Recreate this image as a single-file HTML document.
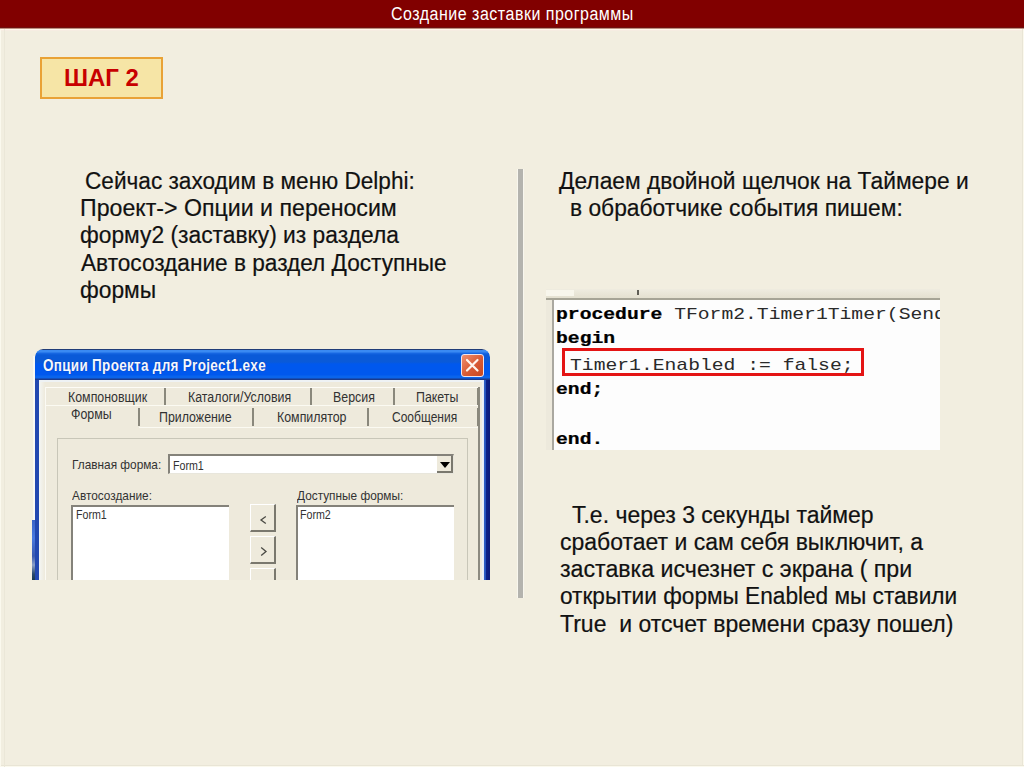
<!DOCTYPE html>
<html><head><meta charset="utf-8">
<style>
*{margin:0;padding:0;box-sizing:border-box}
html,body{width:1024px;height:767px;overflow:hidden;background:#f2eee0}
body{position:relative;font-family:"Liberation Sans",sans-serif;color:#000}
.a{position:absolute}
.hdr{position:absolute;left:0;top:0;width:1024px;height:31px;background:linear-gradient(#810000 0,#810000 27px,#6e1010 27px,#6e1010 28px,#c09080 28px,#c09080 29px,#fff8ee 29px,#fff8ee 30px,#f6ece2 30px)}
.hdr span{position:absolute;left:391px;top:6.2px;color:#fff;font-size:16px;line-height:18px;white-space:pre;letter-spacing:0.5px;transform:scaleY(1.1);transform-origin:0 14px}
.step{position:absolute;left:40px;top:57px;width:123px;height:42px;border:2px solid #e9a236;background:#f6e5a6}
.step span{position:absolute;left:21.5px;top:6.3px;color:#c80000;font-weight:bold;font-size:23px;line-height:26px;white-space:pre;transform:scaleX(1.04);transform-origin:0 0}
.txt{position:absolute;font-size:22.8px;line-height:27.2px;white-space:pre;color:#111;-webkit-text-stroke:0.2px #111}
.divider{position:absolute;left:518px;top:169px;width:5px;height:429px;background:#b4b3ae;box-shadow:-1px 0 #f8f6ee,1px 0 #f8f6ee}
/* code */
.code{position:absolute;left:546px;top:289px;width:394px;height:161px;background:#ede9dc;overflow:hidden}
.code .strip{position:absolute;left:0;top:0;width:394px;height:9px;background:linear-gradient(#efece0,#e4e0d0)}
.code .hl{position:absolute;left:0;top:1px;width:28px;height:6px;background:#f8f6ec}
.code .mk{position:absolute;left:91px;top:1px;width:2px;height:5px;background:#605e56}
.code .line{position:absolute;left:0;top:9px;width:394px;height:2px;background:#a6a496}
.code .lm{position:absolute;left:6px;top:11px;width:1.5px;height:150px;background:#aaa8a0}
.code .ed{position:absolute;left:7px;top:11px;width:387px;height:150px;background:#fdfdfd}
.cl{position:absolute;font-family:"Liberation Mono",monospace;font-size:19.7px;line-height:22px;white-space:pre;color:#2a2a2a;transform:scaleY(0.82);transform-origin:0 16.25px}
.cl b{font-weight:bold;color:#000;-webkit-text-stroke:0.3px #000}
.rbox{position:absolute;left:16px;top:59px;width:302px;height:28px;border:3.5px solid #e41414}
/* dialog */
.dlg{position:absolute;left:35px;top:349px;width:455px;height:231px;background:#eeeadc;overflow:hidden;border-radius:8px 8px 0 0}
.tb{position:absolute;left:0;top:0;width:455px;height:31px;background:linear-gradient(#203c78 0,#203c78 1px,#3a8af2 1px,#3a8af2 3px,#1a6ae4 4px,#0a5ad8 6px,#0a5ad8 13px,#0058ee 15px,#0058ee 26px,#0a64ec 27px,#0a64ec 29px,#1a3a8c 30px);border-radius:8px 8px 0 0}
.tb span{position:absolute;left:8px;top:11px;color:#f4f8ff;font-weight:bold;font-size:13.5px;line-height:14px;white-space:pre;letter-spacing:0.3px;transform:scaleY(1.22);transform-origin:0 11px;text-shadow:0 0 1px #0a2a90}
.bl{position:absolute;left:0;top:31px;width:4px;height:200px;background:#2248b0}
.bl2{position:absolute;left:4px;top:31px;width:6px;height:200px;background:linear-gradient(90deg,#f4f6f4,#eeeadc)}
.br{position:absolute;left:447px;top:31px;width:8px;height:200px;background:linear-gradient(90deg,#eef2f8 0,#e0e8f4 2px,#3060c8 2px,#2050b8 4px,#0c2088 4px,#0a1a78 100%)}
.cbtn{position:absolute;left:426px;top:5px;width:23px;height:23px;border:1.5px solid #f0e4ec;border-radius:3px;background:linear-gradient(135deg,#f09070,#d85a34 55%,#c84820)}
.t{position:absolute;font-size:12.4px;line-height:14px;white-space:pre;color:#323232}
.tr{transform:scaleY(1.12);transform-origin:0 11px}
.sx{transform:scaleX(0.955);transform-origin:0 0}
.fx{transform:scaleX(0.86);transform-origin:0 0}
.tab{position:absolute;background:#eeeadc}
.sep{position:absolute;width:1.6px;background:#8a887c}
.btn{background:#eeeadc;border-right:2px solid #7a786e;border-bottom:2px solid #7a786e;border-top:1px solid #fff;border-left:1px solid #fff}
</style></head><body>
<div class="hdr"><span>Создание заставки программы</span></div>
<div class="step"><span>ШАГ 2</span></div>
<div class="txt" id="L0" style="transform:scale(0.992,1.065);transform-origin:0 21px;left:85px;top:168px">Сейчас заходим в меню Delphi:</div>
<div class="txt" id="L1" style="transform:scale(1.016,1.065);transform-origin:0 21px;left:80px;top:195px">Проект-&gt; Опции и переносим</div>
<div class="txt" id="L2" style="transform:scale(1.0,1.065);transform-origin:0 21px;left:80px;top:222px">форму2 (заставку) из раздела</div>
<div class="txt" id="L3" style="transform:scale(0.993,1.065);transform-origin:0 21px;left:81px;top:250px">Автосоздание в раздел Доступные</div>
<div class="txt" id="L4" style="transform:scale(1.0,1.065);transform-origin:0 21px;left:80px;top:277px">формы</div>
<div class="txt" id="L5" style="transform:scale(1.0,1.065);transform-origin:0 21px;left:559px;top:168px">Делаем двойной щелчок на Таймере и</div>
<div class="txt" id="L6" style="transform:scale(1.0,1.065);transform-origin:0 21px;left:570px;top:195px">в обработчике события пишем:</div>
<div class="txt" id="L7" style="transform:scale(1.008,1.065);transform-origin:0 21px;left:572px;top:502px">Т.е. через 3 секунды таймер</div>
<div class="txt" id="L8" style="transform:scale(1.008,1.065);transform-origin:0 21px;left:560px;top:529px">сработает и сам себя выключит, а</div>
<div class="txt" id="L9" style="transform:scale(1.016,1.065);transform-origin:0 21px;left:560px;top:556px">заставка исчезнет с экрана ( при</div>
<div class="txt" id="L10" style="transform:scale(0.993,1.065);transform-origin:0 21px;left:560px;top:583px">открытии формы Enabled мы ставили</div>
<div class="txt" id="L11" style="transform:scale(1.009,1.065);transform-origin:0 21px;left:560px;top:610.5px">True  и отсчет времени сразу пошел)</div>
<div class="divider"></div>

<div class="code">
  <div class="strip"></div>
  <div class="hl"></div>
  <div class="mk"></div>
  <div class="line"></div>
  <div class="ed"></div>
  <div class="lm"></div>
  <div class="cl" style="left:10px;top:13.7px"><b>procedure</b> TForm2.Timer1Timer(Sender</div>
  <div class="cl" style="left:10px;top:38.3px"><b>begin</b></div>
  <div class="cl" style="left:24px;top:64.8px">Timer1.Enabled := false;</div>
  <div class="cl" style="left:10px;top:89.2px"><b>end;</b></div>
  <div class="cl" style="left:10px;top:139.1px"><b>end.</b></div>
  <div class="rbox"></div>
</div>

<div class="dlg">
  <div class="tb"><span>Опции Проекта для Project1.exe</span></div>
  <div class="cbtn"><svg width="20" height="20" style="position:absolute;left:0;top:0"><path d="M5 5L15.5 15.5M15.5 5L5 15.5" stroke="#fff6ee" stroke-width="2.2" stroke-linecap="round"/></svg></div>
  <div class="bl"></div>
  <div class="bl2"></div>
  <div class="a" style="left:4px;top:31px;width:443px;height:2px;background:#eef2f4"></div>
  <div class="br"></div>
</div>
<div id="dlgc">
  <!-- tab control body -->
  <div class="a" style="left:45px;top:387px;width:434px;height:193px;background:#eeeadc;border-left:1px solid #fbfaf4"></div>
  <div class="a" style="left:478px;top:387px;width:2px;height:193px;background:#8c8a80"></div>
  <!-- row1 tabs -->
  <div class="a" style="left:46px;top:387px;width:432px;height:1px;background:#fdfcf6"></div>
  <div class="sep" style="left:164px;top:388px;height:18px"></div>
  <div class="sep" style="left:310px;top:388px;height:18px"></div>
  <div class="sep" style="left:393px;top:388px;height:18px"></div>
  <div class="sep" style="left:477px;top:388px;height:18px"></div>
  <div class="a" style="left:46px;top:405px;width:432px;height:1px;background:#fbfaf2"></div>
  <div class="t tr" style="left:68px;top:391.2px">Компоновщик</div>
  <div class="t tr" style="left:188px;top:391.2px">Каталоги/Условия</div>
  <div class="t tr" style="left:333px;top:391.2px">Версия</div>
  <div class="t tr" style="left:416px;top:391.2px">Пакеты</div>
  <!-- row2 tabs -->
  <div class="sep" style="left:138px;top:407.5px;height:18.5px"></div>
  <div class="sep" style="left:252px;top:407.5px;height:18.5px"></div>
  <div class="sep" style="left:367px;top:407.5px;height:18.5px"></div>
  <div class="sep" style="left:477px;top:407.5px;height:18.5px"></div>
  <div class="a" style="left:139px;top:427px;width:339px;height:1px;background:#fbfaf2"></div>
  <div class="t tr" style="left:71px;top:408.4px">Формы</div>
  <div class="t tr" style="left:159px;top:410.5px">Приложение</div>
  <div class="t tr" style="left:277px;top:410.5px">Компилятор</div>
  <div class="t tr" style="left:392px;top:410.5px;transform:scale(0.97,1.12)">Сообщения</div>
  <!-- inner panel -->
  <div class="a" style="left:57px;top:438px;width:411px;height:142px;border-left:1px solid #c8c6b8;border-top:1px solid #c8c6b8;border-right:1px solid #c8c6b8;background:#eeeadc"></div>
  <div class="t sx" style="left:72px;top:458px">Главная форма:</div>
  <div class="a" style="left:168px;top:454px;width:286px;height:20px;background:#fff;border-top:2px solid #84827a;border-left:2px solid #84827a;border-bottom:1px solid #e8e6dc;border-right:1px solid #e8e6dc"></div>
  <div class="t fx" style="left:173px;top:459px">Form1</div>
  <div class="a" style="left:437px;top:456px;width:16px;height:17px;background:#eeeadc;border-right:2px solid #7a786e;border-bottom:2px solid #7a786e"></div>
  <div class="a" style="left:440px;top:462px;width:0;height:0;border-left:5px solid transparent;border-right:5px solid transparent;border-top:6px solid #000"></div>
  <div class="t sx" style="left:72px;top:489px">Автосоздание:</div>
  <div class="t sx" style="left:297px;top:489px">Доступные формы:</div>
  <div class="a" style="left:71px;top:505px;width:158px;height:80px;background:#fff;border-top:2px solid #84827a;border-left:2px solid #84827a"></div>
  <div class="t fx" style="left:76px;top:508px">Form1</div>
  <div class="a" style="left:296px;top:505px;width:158px;height:80px;background:#fff;border-top:2px solid #84827a;border-left:2px solid #84827a"></div>
  <div class="t fx" style="left:300px;top:508px">Form2</div>
  <div class="a btn" style="left:250px;top:504px;width:26px;height:28px"></div>
  <svg class="a" style="left:255px;top:510px" width="16" height="18"><path d="M10.8 6.5L6 10L10.8 13.6" fill="none" stroke="#4a4a44" stroke-width="1.3"/></svg>
  <div class="a btn" style="left:250px;top:536px;width:26px;height:28px"></div>
  <svg class="a" style="left:255px;top:542px" width="16" height="18"><path d="M6.2 5.6L11 9.5L6.2 13.5" fill="none" stroke="#4a4a44" stroke-width="1.3"/></svg>
  <div class="a btn" style="left:250px;top:568px;width:26px;height:28px"></div>
  <div class="a" style="left:0;top:580px;width:500px;height:30px;background:#f2eee0"></div>
</div>
<div class="a" style="left:1022px;top:29px;width:1px;height:738px;background:#e9e5d6"></div>
<div class="a" style="left:1023px;top:29px;width:1px;height:738px;background:#fbf9ee"></div>
<div class="a" style="left:0;top:765px;width:1024px;height:1px;background:#e9e5d6"></div>
<div class="a" style="left:0;top:766px;width:1024px;height:1px;background:#fbf9ee"></div>
<div class="a" style="left:0;top:29px;width:1px;height:738px;background:#fbf9ee"></div>
<div class="a" style="left:4px;top:29px;width:1px;height:738px;background:#ebe7d8"></div>
<div class="a" style="left:33px;top:356px;width:2px;height:164px;background:#f8f8f4"></div>
<div class="a" style="left:32px;top:520px;width:3px;height:60px;background:linear-gradient(#3a64c8,#4a7ae0 30%,#3a5ab0 60%,#8aa0c8 75%,#2a4a70 90%,#1a3a50)"></div>
</body></html>
